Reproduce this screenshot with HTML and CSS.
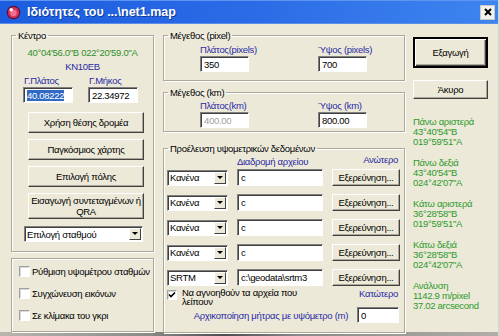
FILE: index.html
```html
<!DOCTYPE html>
<html lang="el">
<head>
    <meta charset="UTF-8">
    <meta name="viewport" content="width=device-width, initial-scale=1.0">
    <title>Ιδιότητες του ...\net1.map</title>
    <link rel="stylesheet" href="styles.css">
</head>
<body>
    <div class="window">
        <div class="titlebar">
            <svg class="app-icon" width="15" height="15" viewBox="0 0 15 15">
                <circle cx="7.5" cy="7.5" r="6.8" fill="#5a1030"/>
                <circle cx="7.5" cy="7.5" r="5.6" fill="#d8305a"/>
                <circle cx="7.5" cy="8" r="3.2" fill="#f07090"/>
                <circle cx="5.2" cy="4.8" r="1.8" fill="#fff"/>
            </svg>
            <span class="title">Ιδιότητες του ...\net1.map</span>
            <div class="close-btn">
                <svg width="8" height="8" viewBox="0 0 8 8">
                    <path d="M1 1 L7 7 M7 1 L1 7" stroke="#000" stroke-width="2"/>
                </svg>
            </div>
        </div>

        <div class="client">
            <!-- αριστερή στήλη -->
            <div class="col-left">
                <fieldset class="group center-group">
                    <legend>Κέντρο</legend>
                    <div class="coords">40°04'56.0"Β 022°20'59.0"Α</div>
                    <div class="locator">KN10EB</div>
                    <div class="latlon">
                        <div class="field">
                            <span class="label">Γ.Πλάτος</span>
                            <div class="edit latlon-edit"><span class="selected">40.08222</span></div>
                        </div>
                        <div class="field">
                            <span class="label">Γ.Μήκος</span>
                            <div class="edit latlon-edit">22.34972</div>
                        </div>
                    </div>
                    <div class="btn side-btn first">Χρήση θέσης δρομέα</div>
                    <div class="btn side-btn">Παγκόσμιος χάρτης</div>
                    <div class="btn side-btn">Επιλογή πόλης</div>
                    <div class="btn side-btn tall">Εισαγωγή συντεταγμένων ή QRA</div>
                    <div class="combo station-combo">
                        <span class="combo-text">Επιλογή σταθμού</span>
                        <span class="combo-arrow"></span>
                    </div>
                </fieldset>

                <fieldset class="group options-group">
                    <div class="check-row"><span class="checkbox"></span>Ρύθμιση υψομέτρου σταθμών</div>
                    <div class="check-row"><span class="checkbox"></span>Συγχώνευση εικόνων</div>
                    <div class="check-row"><span class="checkbox"></span>Σε κλίμακα του γκρι</div>
                </fieldset>
            </div>

            <!-- μεσαία στήλη -->
            <div class="col-mid">
                <fieldset class="group size-group">
                    <legend>Μέγεθος (pixel)</legend>
                    <div class="size-grid">
                        <span class="label">Πλάτος(pixels)</span>
                        <span class="label">Ύψος (pixels)</span>
                        <div class="edit size-edit">350</div>
                        <div class="edit size-edit">700</div>
                    </div>
                </fieldset>

                <fieldset class="group size-group km-group">
                    <legend>Μέγεθος (km)</legend>
                    <div class="size-grid">
                        <span class="label">Πλάτος(km)</span>
                        <span class="label">Ύψος (km)</span>
                        <div class="edit size-edit disabled">400.00</div>
                        <div class="edit size-edit">800.00</div>
                    </div>
                </fieldset>

                <fieldset class="group dem-group">
                    <legend>Προέλευση υψομετρικών δεδομένων</legend>
                    <div class="dem-header">
                        <span class="label path-label">Διαδρομή αρχείου</span>
                        <span class="label upper-label">Ανώτερο</span>
                    </div>
                    <div class="dem-row">
                        <div class="combo dem-combo"><span class="combo-text">Κανένα</span><span class="combo-arrow"></span></div>
                        <div class="edit path-edit">c</div>
                        <div class="btn browse-btn">Εξερεύνηση...</div>
                    </div>
                    <div class="dem-row">
                        <div class="combo dem-combo"><span class="combo-text">Κανένα</span><span class="combo-arrow"></span></div>
                        <div class="edit path-edit">c</div>
                        <div class="btn browse-btn">Εξερεύνηση...</div>
                    </div>
                    <div class="dem-row">
                        <div class="combo dem-combo"><span class="combo-text">Κανένα</span><span class="combo-arrow"></span></div>
                        <div class="edit path-edit">c</div>
                        <div class="btn browse-btn">Εξερεύνηση...</div>
                    </div>
                    <div class="dem-row">
                        <div class="combo dem-combo"><span class="combo-text">Κανένα</span><span class="combo-arrow"></span></div>
                        <div class="edit path-edit">c</div>
                        <div class="btn browse-btn">Εξερεύνηση...</div>
                    </div>
                    <div class="dem-row">
                        <div class="combo dem-combo"><span class="combo-text">SRTM</span><span class="combo-arrow"></span></div>
                        <div class="edit path-edit">c:\geodata\srtm3</div>
                        <div class="btn browse-btn">Εξερεύνηση...</div>
                    </div>
                    <div class="missing-row">
                        <span class="checkbox checked">
                            <svg width="8" height="8" viewBox="0 0 8 8"><path d="M1 3.5 L3 5.5 L7 1.5" stroke="#000" stroke-width="1.6" fill="none"/></svg>
                        </span>
                        <span class="missing-text">Να αγνοηθούν τα αρχεία που λείπουν</span>
                        <span class="label lower-label">Κατώτερο</span>
                    </div>
                    <div class="init-row">
                        <span class="label">Αρχικοποίηση μήτρας με υψόμετρο (m)</span>
                        <div class="edit init-edit">0</div>
                    </div>
                </fieldset>
            </div>

            <!-- δεξιά στήλη -->
            <div class="col-right">
                <div class="btn action-btn default">Εξαγωγή</div>
                <div class="btn action-btn cancel">Άκυρο</div>
                <div class="corners">
                    <div class="corner">Πάνω αριστερά<br>43°40'54"Β<br>019°59'51"Α</div>
                    <div class="corner">Πάνω δεξιά<br>43°40'54"Β<br>024°42'07"Α</div>
                    <div class="corner">Κάτω αριστερά<br>36°28'58"Β<br>019°59'51"Α</div>
                    <div class="corner">Κάτω δεξιά<br>36°28'58"Β<br>024°42'07"Α</div>
                    <div class="corner">Ανάλυση<br>1142.9 m/pixel<br>37.02 arcsecond</div>
                </div>
            </div>
        </div>
        <div class="desk-strip"></div>
    </div>
</body>
</html>
```

FILE: styles.css
```css
* {
    box-sizing: border-box;
}
body {
    margin: 0;
    background-color: #ece9d8;
    font-family: "Liberation Sans", Arial, sans-serif;
    font-size: 9.5px;
    letter-spacing: -0.3px;
    line-height: 13px;
    color: #000;
}
.window {
    width: 500px;
    height: 336px;
    overflow: hidden;
    background-color: #ece9d8;
    border-right: 2px solid #d8d6cc;
}

/* γραμμή τίτλου */
.titlebar {
    height: 24px;
    display: flex;
    align-items: center;
    padding-left: 6px;
    background: linear-gradient(to right, #1c5ddf 0%, #2b6be6 50%, #3d85ef 100%);
    border-top: 1px solid #5d95f0;
    border-bottom: 1px solid #5b8ee8;
}
.app-icon {
    flex: none;
}
.title {
    margin-left: 6px;
    color: #fff;
    font-weight: bold;
    font-size: 12.5px;
    letter-spacing: 0;
    text-shadow: 1px 1px 0 #0f3c9c;
}
.close-btn {
    margin-left: auto;
    margin-right: 3px;
    width: 15px;
    height: 15px;
    display: flex;
    align-items: center;
    justify-content: center;
    background-color: #f2f2ee;
    border: 1px solid #c8c8c8;
}

/* περιοχή παραθύρου */
.client {
    display: flex;
    align-items: flex-start;
    padding: 5px 0 0 11px;
    height: 308px;
}
.col-left {
    width: 143px;
    display: flex;
    flex-direction: column;
}
.col-mid {
    width: 242px;
    margin-left: 9px;
    display: flex;
    flex-direction: column;
}
.col-right {
    width: 75px;
    margin-left: 8px;
    display: flex;
    flex-direction: column;
}

.group {
    margin: 0;
    padding: 0;
    min-width: 0;
    border: 1px solid #aca899;
    box-shadow: inset 1px 1px 0 #fff, 1px 1px 0 #fff;
}
.group legend {
    margin-left: 4px;
    padding: 0 2px;
    line-height: 13px;
}

.label {
    color: #2a2aa6;
    white-space: nowrap;
}

/* πεδία κειμένου */
.edit {
    height: 16px;
    background-color: #fff;
    border: 1px solid;
    border-color: #7f7f7f #fff #fff #7f7f7f;
    box-shadow: inset 1px 1px 0 #404040;
    padding: 1px 0 0 3px;
    line-height: 13px;
    white-space: nowrap;
    overflow: hidden;
}
.edit.disabled {
    color: #a0a0a0;
}
.selected {
    background-color: #316ac5;
    color: #fff;
}

/* κουμπιά */
.btn {
    display: flex;
    align-items: center;
    justify-content: center;
    text-align: center;
    background-color: #ece9d8;
    border: 1px solid;
    border-color: #fff #404040 #404040 #fff;
    box-shadow: inset -1px -1px 0 #aca899;
}

/* σύνθετα πλαίσια */
.combo {
    display: flex;
    align-items: center;
    height: 16px;
    background-color: #fff;
    border: 1px solid;
    border-color: #7f7f7f #fff #fff #7f7f7f;
    box-shadow: inset 1px 1px 0 #404040;
    padding: 1px 1px 1px 2px;
}
.combo-text {
    flex: 1;
    white-space: nowrap;
    overflow: hidden;
}
.combo-arrow {
    position: relative;
    width: 12px;
    height: 12px;
    background-color: #ece9d8;
    border: 1px solid;
    border-color: #fff #404040 #404040 #fff;
}
.combo-arrow::after {
    content: "";
    position: absolute;
    left: 2px;
    top: 3px;
    border-left: 3px solid transparent;
    border-right: 3px solid transparent;
    border-top: 3px solid #000;
}

/* πλαίσια ελέγχου */
.checkbox {
    flex: none;
    width: 11px;
    height: 11px;
    display: flex;
    align-items: center;
    justify-content: center;
    background-color: #fff;
    border: 1px solid;
    border-color: #a0a0a0 #fff #fff #a0a0a0;
    box-shadow: inset 1px 1px 0 #d8d8d8;
}

/* Κέντρο */
.center-group {
    height: 223px;
}
.coords {
    margin-top: 4px;
    text-align: center;
    color: #2d8f2d;
}
.locator {
    margin-top: 1px;
    text-align: center;
    color: #2a2aa6;
}
.latlon {
    margin-top: 1px;
    display: flex;
    padding-left: 11px;
}
.field {
    display: flex;
    flex-direction: column;
    width: 69px;
}
.field .label {
    padding-left: 1px;
}
.latlon-edit {
    width: 50px;
}
.side-btn {
    width: 116px;
    height: 21px;
    margin: 6px 0 0 16px;
}
.side-btn.first {
    margin-top: 9px;
}
.side-btn.tall {
    height: 26px;
    line-height: 11px;
    padding: 0 2px;
}
.station-combo {
    width: 119px;
    margin: 7px 0 0 12px;
}

.options-group {
    margin-top: 6px;
    height: 74px;
    padding: 6px 0 0 7px;
}
.check-row {
    display: flex;
    align-items: center;
    gap: 2px;
    height: 13px;
    margin-bottom: 9px;
    white-space: nowrap;
}

/* Μέγεθος */
.size-group {
    height: 52px;
}
.km-group {
    margin-top: 5px;
    height: 46px;
}
.size-grid {
    display: grid;
    grid-template-columns: 118px 49px;
    margin: 1px 0 0 36px;
}
.km-group .size-grid {
    margin-top: 0;
}
.size-edit {
    width: 49px;
}

/* Προέλευση υψομετρικών δεδομένων */
.dem-group {
    margin-top: 10px;
    height: 191px;
}
.dem-header {
    display: flex;
    justify-content: space-between;
    padding: 0 6px 0 73px;
}
.upper-label {
    margin-top: -2px;
}
.dem-row {
    display: flex;
    align-items: center;
    height: 17px;
    margin: 1px 0 8px 3px;
}
.dem-row + .dem-row {
    margin-top: 0;
}
.dem-combo {
    width: 61px;
}
.path-edit {
    width: 86px;
    height: 17px;
    margin-left: 9px;
}
.browse-btn {
    width: 68px;
    height: 17px;
    margin-left: 9px;
}
.missing-row {
    display: flex;
    align-items: flex-start;
    margin: -6px 0 0 3px;
}
.missing-row .checkbox {
    width: 10px;
    height: 10px;
    margin-top: 2px;
}
.missing-text {
    width: 125px;
    margin-left: 5px;
    line-height: 9px;
}
.lower-label {
    margin-left: auto;
    margin-right: 6px;
    margin-top: -1px;
}
.init-row {
    display: flex;
    align-items: center;
    justify-content: flex-end;
    margin: 1px 5px 0 0;
}
.init-edit {
    width: 42px;
    margin-left: 9px;
}

/* δεξιά στήλη */
.action-btn {
    width: 75px;
}
.action-btn.default {
    margin-top: 8px;
    height: 31px;
    border: 2px solid #000;
    box-shadow: inset 1px 1px 0 #fff, inset -1px -1px 0 #404040, inset -2px -2px 0 #aca899;
}
.action-btn.cancel {
    margin-top: 12px;
    height: 19px;
}
.corners {
    margin-top: 18px;
    color: #2d9a2d;
    line-height: 10px;
    white-space: nowrap;
}
.corner {
    margin-bottom: 11px;
}

.desk-strip {
    height: 4px;
    background: linear-gradient(to right, #b8b6ae 0%, #8a8a88 30%, #4e4e4c 45%, #8a8a88 60%, #b0aea6 100%);
}
```
